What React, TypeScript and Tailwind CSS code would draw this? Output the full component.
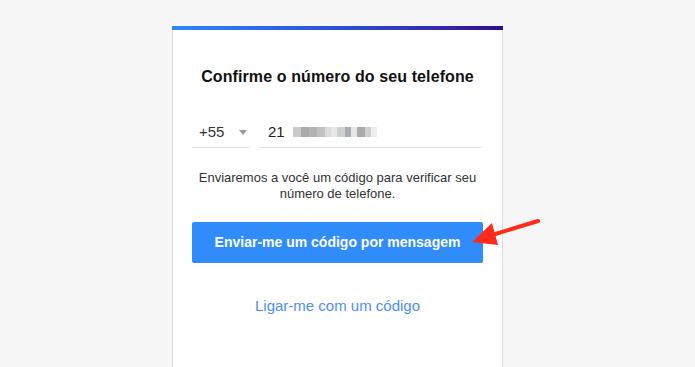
import React from "react";

const blurBlocks = [
  { w: 8, c: "#c9c9c9" },
  { w: 8, c: "#a9a9a9" },
  { w: 8, c: "#b4b4b4" },
  { w: 8, c: "#c2c2c2" },
  { w: 6, c: "#dcdcdc" },
  { w: 6, c: "#e9e9e9" },
  { w: 8, c: "#d0d0d0" },
  { w: 6, c: "#a8adb5" },
  { w: 6, c: "#e6e6e6" },
  { w: 8, c: "#aaaaaa" },
  { w: 6, c: "#cfcfcf" },
  { w: 6, c: "#eceef2" },
];

function RedArrow() {
  return (
    <svg
      className="absolute left-[468px] top-[214px] w-[76px] h-[36px]"
      viewBox="0 0 76 36"
    >
      <line x1="70" y1="7" x2="24" y2="21" stroke="#ff2a1a" strokeWidth="4" strokeLinecap="round" />
      <polygon points="4,28 24,9 30,31" fill="#ff2a1a" />
    </svg>
  );
}

export default function App() {
  return (
    <div
      className="relative w-[695px] h-[367px] overflow-hidden bg-[#f6f6f6]"
      style={{ fontFamily: "'Liberation Sans', Arial, sans-serif" }}
    >
      <div className="ml-[172px] mt-[26px] w-[331px] h-[341px] bg-white border-x border-[#dcdcdc] flex flex-col">
        <div className="h-[4px] -mx-px bg-gradient-to-r from-[#2e86ff] via-[#2b4fd6] to-[#32088f]" />
        <div className="px-[19px] pt-[37px] flex flex-col">
          <h1 className="text-center text-[16px] font-bold text-[#111] leading-5 tracking-[0.1px]">
            Confirme o número do seu telefone
          </h1>
          <div className="mt-[30px] flex gap-2">
            <div className="w-[58px] border-b border-[#e3e3e3] flex items-center justify-between pl-[7px] pr-[3px] h-[31px]">
              <span className="text-[15px] text-[#333]">+55</span>
              <span className="w-0 h-0 border-x-[4px] border-x-transparent border-t-[5px] border-t-[#999]" />
            </div>
            <div className="flex-1 border-b border-[#e3e3e3] flex items-center pl-[10px] h-[31px]">
              <span className="text-[15px] text-[#222]">21</span>
              <div className="ml-[8px] flex items-center h-[10px]">
                {blurBlocks.map((b, i) => (
                  <span key={i} className="h-[10px]" style={{ width: b.w, background: b.c }} />
                ))}
              </div>
            </div>
          </div>
          <p className="mt-[22px] text-center text-[13px] leading-[16px] text-[#333]">
            Enviaremos a você um código para verificar seu
            <br />
            número de telefone.
          </p>
          <button className="mt-[20px] h-[41px] w-full rounded-[2px] bg-[#2f8cfa] text-white text-[14px] font-bold">
            Enviar-me um código por mensagem
          </button>
          <a className="mt-[34px] text-center text-[15px] leading-[17px] text-[#4d8ef5]">
            Ligar-me com um código
          </a>
        </div>
      </div>
      <RedArrow />
    </div>
  );
}
